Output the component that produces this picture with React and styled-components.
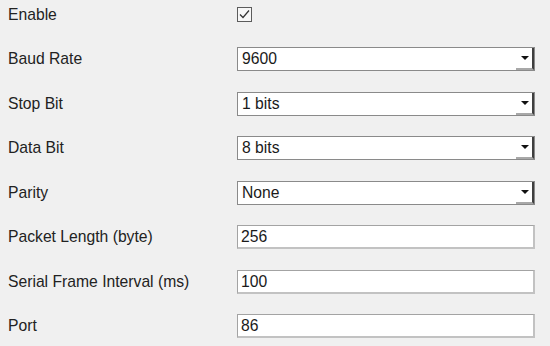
import { Fragment } from "react"
import styled, { createGlobalStyle } from "styled-components"

const GlobalStyle = createGlobalStyle`
  html, body {
    margin: 0;
    padding: 0;
    background: #f0f0f0;
  }
  body {
    font-family: "Liberation Sans", Arial, sans-serif;
    color: #1f1f1f;
  }
`

const Form = styled.div`
  width: 550px;
  height: 346px;
  box-sizing: border-box;
  padding: 2.5px 0 0 8px;
  display: grid;
  grid-template-columns: 229px 298px;
  grid-auto-rows: 24px;
  row-gap: 20.5px;
  align-items: center;
`

const Label = styled.div`
  font-size: 15.7px;
  line-height: 24px;
  color: #222;
`

const CheckBox = styled.div`
  width: 15px;
  height: 15px;
  box-sizing: border-box;
  border: 1px solid #5c5c5c;
  background: #f7f7f7;
  display: flex;
  align-items: center;
  justify-content: center;
`

const Select = styled.div`
  height: 24px;
  box-sizing: border-box;
  border: 1px solid #8a8a8a;
  background: #fff;
  display: flex;
  align-items: stretch;
`

const Value = styled.div`
  flex: 1;
  font-size: 15.7px;
  line-height: 22px;
  padding-left: ${p => p.$pad || 4}px;
  color: #1a1a1a;
  white-space: nowrap;
`

const DropButton = styled.div`
  width: 18px;
  box-sizing: border-box;
  border-right: 2px solid #3f3f3f;
  border-bottom: 2px solid #a8a8a8;
  display: flex;
  align-items: center;
  justify-content: center;
  padding-left: 2px;
`

const Arrow = styled.div`
  width: 0;
  height: 0;
  border-left: 4px solid transparent;
  border-right: 4px solid transparent;
  border-top: 4px solid #111;
`

const TextBox = styled.div`
  height: 24px;
  box-sizing: border-box;
  border: 1px solid #a3a3a3;
  border-right: 2px solid #c2c2c2;
  border-bottom: 2px solid #c2c2c2;
  background: #fff;
  display: flex;
`

const selects = [
  ["Baud Rate", "9600"],
  ["Stop Bit", "1 bits"],
  ["Data Bit", "8 bits"],
  ["Parity", "None"],
]

const inputs = [
  ["Packet Length (byte)", "256"],
  ["Serial Frame Interval (ms)", "100"],
  ["Port", "86"],
]

function App() {
  return (
    <>
      <GlobalStyle />
      <Form>
        <Label>Enable</Label>
        <CheckBox>
          <svg width="13" height="13" viewBox="0 0 13 13">
            <path d="M2 6.5 L5 9.5 L11 2.5" fill="none" stroke="#333" strokeWidth="1.2" />
          </svg>
        </CheckBox>

        {selects.map(([label, value]) => (
          <Fragment key={label}>
            <Label>{label}</Label>
            <Select>
              <Value>{value}</Value>
              <DropButton>
                <Arrow />
              </DropButton>
            </Select>
          </Fragment>
        ))}

        {inputs.map(([label, value]) => (
          <Fragment key={label}>
            <Label>{label}</Label>
            <TextBox>
              <Value $pad={3}>{value}</Value>
            </TextBox>
          </Fragment>
        ))}
      </Form>
    </>
  )
}

export default App
